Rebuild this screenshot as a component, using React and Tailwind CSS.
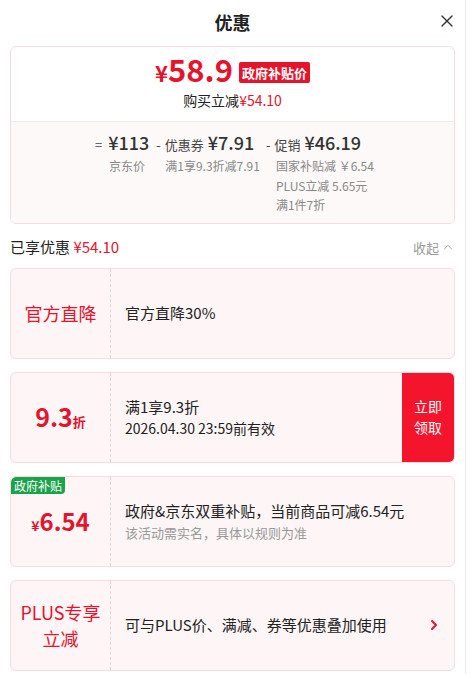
import { ChevronUp, ChevronRight, X } from 'lucide-react'

const font = { fontFamily: '"Noto Sans CJK SC", "Noto Sans", sans-serif' }

function Coupon({ left, children, right, badge }) {
  return (
    <div className="relative flex h-[91px] rounded-[6px] border border-[#f3dde1] bg-[#fdf5f6] overflow-hidden">
      {badge && (
        <div className="absolute left-0 top-0 rounded-br-[4px] rounded-tl-[5px] bg-[#1aa34a] px-[3px] text-[12px] leading-[17px] text-white">
          {badge}
        </div>
      )}
      <div className="flex w-[100px] shrink-0 items-center justify-center border-r border-dashed border-[#ead2d6] text-center">
        {left}
      </div>
      <div className="flex flex-1 flex-col justify-center pl-[14px]">{children}</div>
      {right}
    </div>
  )
}

export default function App() {
  return (
    <div className="h-[674px] w-[474px] bg-white text-[#1a1a1a]" style={font}>
      <div className="relative h-full w-[466px] border-r border-[#ececec]">
        <div className="relative flex h-[44px] items-center justify-center">
          <span className="text-[18px] font-bold text-[#222]">优惠</span>
          <X className="absolute right-[8px] top-[11px] h-[20px] w-[20px] text-[#333]" strokeWidth={1.6} />
        </div>

        <div className="mx-[10px] mt-[2px] overflow-hidden rounded-[6px] border border-[#f3dde1]">
          <div className="flex h-[74px] flex-col items-center pt-[10px]">
            <div className="flex h-[30px] items-center gap-[4px]">
              <span className="font-bold leading-[30px] text-[#e5132c]">
                <span className="text-[22px]">¥</span>
                <span className="text-[31px]">58.9</span>
              </span>
              <span className="ml-[2px] rounded-[2px] bg-[#e5132c] px-[3px] text-[13px] font-bold leading-[21px] text-white">政府补贴价</span>
            </div>
            <div className="mt-[4px] text-[14px] leading-[18px] text-[#222]">
              购买立减<span className="text-[#e5132c]">¥54.10</span>
            </div>
          </div>
          <div className="flex h-[102px] justify-center border-t border-[#f5e6e8] bg-[#fdf9f9] pl-[4px] pt-[7px]">
            <div className="flex flex-col">
              <div className="flex items-baseline text-[#444]">
                <span className="mr-[6px] text-[13px]">=</span>
                <span className="text-[18px] font-medium text-[#333]">¥113</span>
              </div>
              <div className="pl-[14px] text-[12px] leading-[19px] text-[#888]">京东价</div>
            </div>
            <div className="ml-[7px] flex flex-col">
              <div className="flex items-baseline text-[#444]">
                <span className="mr-[4px] text-[13px]">-</span>
                <span className="text-[13px]">优惠券</span>
                <span className="ml-[4px] text-[18px] font-medium text-[#333]">¥7.91</span>
              </div>
              <div className="pl-[9px] text-[12px] leading-[19px] text-[#888]">满1享9.3折减7.91</div>
            </div>
            <div className="ml-[6px] flex flex-col">
              <div className="flex items-baseline text-[#444]">
                <span className="mr-[4px] text-[13px]">-</span>
                <span className="text-[13px]">促销</span>
                <span className="ml-[4px] text-[18px] font-medium text-[#333]">¥46.19</span>
              </div>
              <div className="flex flex-col pl-[10px] text-[12px] leading-[19.5px] text-[#888]">
                <span>国家补贴减 ￥6.54</span>
                <span>PLUS立减 5.65元</span>
                <span>满1件7折</span>
              </div>
            </div>
          </div>
        </div>

        <div className="mx-[10px] mt-[12px] flex items-center justify-between">
          <div className="text-[15px] text-[#222]">
            已享优惠 <span className="text-[#e5132c]">¥54.10</span>
          </div>
          <div className="flex items-center text-[13px] text-[#999]">
            收起
            <ChevronUp className="ml-[2px] h-[14px] w-[14px]" strokeWidth={1.5} />
          </div>
        </div>

        <div className="mx-[10px] mt-[9px] flex flex-col gap-[13px]">
          <Coupon left={<span className="text-[18px] text-[#e5132c]">官方直降</span>}>
            <div className="text-[15px] text-[#222]">官方直降30%</div>
          </Coupon>

          <Coupon
            left={
              <span className="font-bold text-[#e5132c]">
                <span className="text-[25px]">9.3</span>
                <span className="text-[13px]">折</span>
              </span>
            }
            right={
              <div className="flex w-[52px] items-center justify-center bg-[#f4142c] text-center text-[14px] leading-[21px] text-white">
                立即<br />领取
              </div>
            }
          >
            <div className="text-[15px] leading-[22px] text-[#222]">满1享9.3折</div>
            <div className="text-[14px] leading-[21px] text-[#222]">2026.04.30 23:59前有效</div>
          </Coupon>

          <Coupon
            badge="政府补贴"
            left={
              <span className="font-bold text-[#e5132c]">
                <span className="text-[14px]">¥</span>
                <span className="text-[24px]">6.54</span>
              </span>
            }
          >
            <div className="text-[15px] leading-[22px] text-[#222]">政府&amp;京东双重补贴，当前商品可减6.54元</div>
            <div className="mt-[1px] text-[13px] leading-[20px] text-[#999]">该活动需实名，具体以规则为准</div>
          </Coupon>

          <Coupon
            left={<span className="text-[18px] leading-[26px] text-[#e5132c]">PLUS专享<br />立减</span>}
            right={
              <div className="flex w-[40px] items-center justify-center">
                <ChevronRight className="h-[16px] w-[16px] text-[#e5132c]" strokeWidth={3} />
              </div>
            }
          >
            <div className="text-[15px] text-[#222]">可与PLUS价、满减、券等优惠叠加使用</div>
          </Coupon>
        </div>
      </div>
    </div>
  )
}
